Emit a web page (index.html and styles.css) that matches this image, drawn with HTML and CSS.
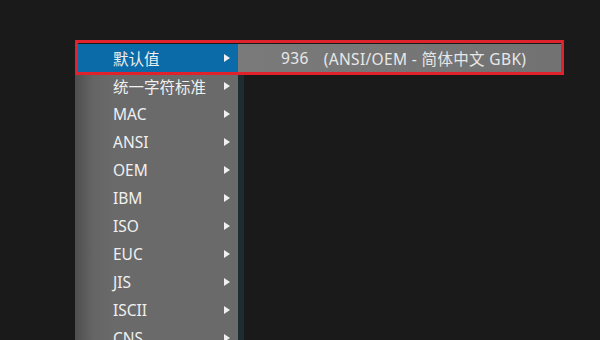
FILE: index.html
```html
<!DOCTYPE html>
<html lang="zh-CN">
<head>
<meta charset="utf-8">
<link rel="stylesheet" href="styles.css">
</head>
<body>
<div class="screen">
  <div class="menus">
    <ul class="menu">
      <li class="item active"><span>默认值</span><i class="arrow"></i></li>
      <li class="item"><span>统一字符标准</span><i class="arrow"></i></li>
      <li class="item"><span>MAC</span><i class="arrow"></i></li>
      <li class="item"><span>ANSI</span><i class="arrow"></i></li>
      <li class="item"><span>OEM</span><i class="arrow"></i></li>
      <li class="item"><span>IBM</span><i class="arrow"></i></li>
      <li class="item"><span>ISO</span><i class="arrow"></i></li>
      <li class="item"><span>EUC</span><i class="arrow"></i></li>
      <li class="item"><span>JIS</span><i class="arrow"></i></li>
      <li class="item"><span>ISCII</span><i class="arrow"></i></li>
      <li class="item"><span>CNS</span><i class="arrow"></i></li>
    </ul>
    <div class="submenu">
      <div class="subitem"><span class="code">936</span><span>(ANSI/OEM - 简体中文 GBK)</span></div>
    </div>
  </div>
  <div class="highlight"></div>
</div>
</body>
</html>
```
FILE: styles.css
```css
html, body {
  margin: 0;
  padding: 0;
  background: #1a1a1a;
}
.screen {
  position: relative;
  width: 600px;
  height: 340px;
  overflow: hidden;
  background: #1a1a1a;
  font-family: "Noto Sans", "Noto Sans CJK SC", sans-serif;
  font-size: 15.5px;
  color: #f0f0f0;
  padding: 44px 0 0 75px;
  box-sizing: border-box;
}
.menus {
  display: flex;
  align-items: flex-start;
}
.menu {
  list-style: none;
  margin: 0;
  padding: 0;
  width: 163px;
  background: linear-gradient(to right, #4e4e4e 0, #656565 18px, #6a6a6a 40px, #6a6a6a 100%);
  box-shadow: 6px 0 0 #1d2c30;
}
.item {
  display: flex;
  align-items: center;
  height: 28px;
  padding: 0 8px 0 38px;
  box-sizing: border-box;
}
.item span {
  flex: 1;
  white-space: nowrap;
}
.item.active {
  background: #0b6aa8;
}
.arrow {
  width: 0;
  height: 0;
  border-top: 4px solid transparent;
  border-bottom: 4px solid transparent;
  border-left: 6px solid #f0f0f0;
}
.submenu {
  width: 323px;
  background: linear-gradient(to right, #7a7a7a, #727272);
}
.subitem {
  height: 28px;
  display: flex;
  align-items: center;
  padding-left: 43px;
  white-space: nowrap;
  color: #e8e8e8;
  letter-spacing: 0.35px;
}
.code {
  margin-right: 15px;
}
.highlight {
  position: absolute;
  left: 75px;
  top: 40px;
  width: 489px;
  height: 35px;
  box-sizing: border-box;
  border: 3px solid #e0222c;
}
```
